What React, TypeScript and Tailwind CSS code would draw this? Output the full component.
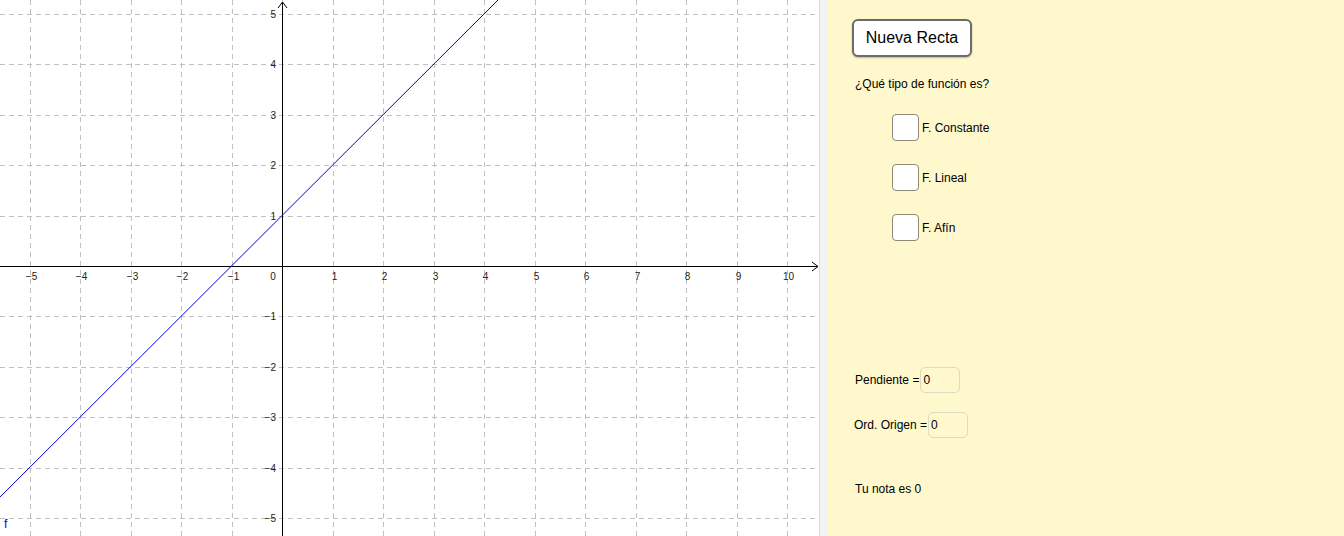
import React from "react";

const ORIGIN_X = 282;
const ORIGIN_Y = 266;
const UNIT_X = 50.5;
const UNIT_Y = 50.4;

const px = (x: number) => Math.round(ORIGIN_X + x * UNIT_X) + 0.5;
const py = (y: number) => Math.round(ORIGIN_Y - y * UNIT_Y) + 0.5;

const xs = [-5, -4, -3, -2, -1, 1, 2, 3, 4, 5, 6, 7, 8, 9, 10];
const ys = [-5, -4, -3, -2, -1, 1, 2, 3, 4, 5];

const label = (n: number) => (n < 0 ? `\u2212${-n}` : `${n}`);

const Graph = () => {
  const lineFrom = { x: -7, y: -6 };
  const lineTo = { x: 6, y: 7 };
  return (
    <svg width="819" height="536" className="block" fontFamily="'Liberation Sans', Arial, sans-serif">
      <rect width="819" height="536" fill="#ffffff" />
      {/* grid */}
      <g stroke="#c0c0c0" strokeWidth="1" strokeDasharray="5 4">
        {[-5, -4, -3, -2, -1, 0, ...xs.filter((k) => k > 0)].map((k) => (
          <line key={`vx${k}`} x1={px(k)} y1={0} x2={px(k)} y2={536} />
        ))}
        {[...ys, 0].map((k) => (
          <line key={`hy${k}`} x1={0} y1={py(k)} x2={819} y2={py(k)} />
        ))}
      </g>

      {/* axes */}
      <g stroke="#000" strokeWidth="1" fill="none">
        <line x1={0} y1={py(0)} x2={818} y2={py(0)} />
        <polyline points={`812,${py(0) - 4.5} 818,${py(0)} 812,${py(0) + 4.5}`} />
        <line x1={px(0)} y1={536} x2={px(0)} y2={2} />
        <polyline points={`${px(0) - 4.5},8 ${px(0)},2 ${px(0) + 4.5},8`} />
      </g>

      {/* axis labels */}
      <g fontSize="10" fill="#222">
        {xs.map((k) => (
          <text key={`lx${k}`} x={px(k) + 1} y={py(0) + 13.5} textAnchor="middle">
            {label(k)}
          </text>
        ))}
        <text x={273} y={py(0) + 13.5} textAnchor="middle">
          0
        </text>
        {ys.map((k) => (
          <text key={`ly${k}`} x={276} y={py(k) + 3.5} textAnchor="end">
            {label(k)}
          </text>
        ))}
      </g>

      {/* f(x) = x + 1 */}
      <line
        x1={ORIGIN_X + lineFrom.x * UNIT_X}
        y1={ORIGIN_Y - lineFrom.y * UNIT_Y}
        x2={ORIGIN_X + lineTo.x * UNIT_X}
        y2={ORIGIN_Y - lineTo.y * UNIT_Y}
        stroke="#0000e0"
        strokeWidth="1"
      />
      <text x={4} y={528} fontSize="12" fill="#0000ff">
        f
      </text>
    </svg>
  );
};

const CheckRow = ({ text }: { text: string }) => (
  <div className="flex items-center h-[27px]">
    <div className="w-[27px] h-[27px] rounded-[4px] border-[1.5px] border-[#8d8a77] bg-white" />
    <span className="ml-[3px] text-[12px] text-black">{text}</span>
  </div>
);

const Field = ({ text }: { text: string }) => (
  <div className="flex items-center h-[26px]">
    <span className="text-[12px] text-black">{text}</span>
    <div className="ml-[1px] w-[40px] h-[26px] rounded-[5px] border-[1.5px] border-[#dedac2] flex items-center pl-[2px] text-[12px] text-black">
      0
    </div>
  </div>
);

export default function App() {
  return (
    <div className="flex w-[1344px] h-[536px] overflow-hidden bg-white font-['Liberation_Sans',Arial,sans-serif]">
      <div className="w-[819px] h-full shrink-0">
        <Graph />
      </div>
      <div className="w-[8px] h-full shrink-0 bg-[#f3f3f3] border-l border-[#dcdcdc]" />
      <div className="flex-1 h-full bg-[#fff8cd] flex flex-col pl-[28px]">
        <button className="mt-[19px] ml-[-3px] w-[120px] h-[38px] rounded-[6px] border-2 border-[#6b6b6b] bg-white text-[16px] text-black shadow-[0_1px_2px_rgba(0,0,0,0.25)]">
          Nueva Recta
        </button>
        <p className="mt-[20px] text-[12px] leading-[14px] text-black">¿Qué tipo de función es?</p>
        <div className="mt-[23px] ml-[37px] flex flex-col gap-[23px]">
          <CheckRow text="F. Constante" />
          <CheckRow text="F. Lineal" />
          <CheckRow text="F. Afín" />
        </div>
        <div className="mt-[126px] flex flex-col gap-[19px]">
          <Field text="Pendiente =" />
          <div className="ml-[-1px]">
            <Field text="Ord. Origen =" />
          </div>
        </div>
        <p className="mt-[44px] text-[12px] leading-[14px] text-black">Tu nota es 0</p>
      </div>
    </div>
  );
}
